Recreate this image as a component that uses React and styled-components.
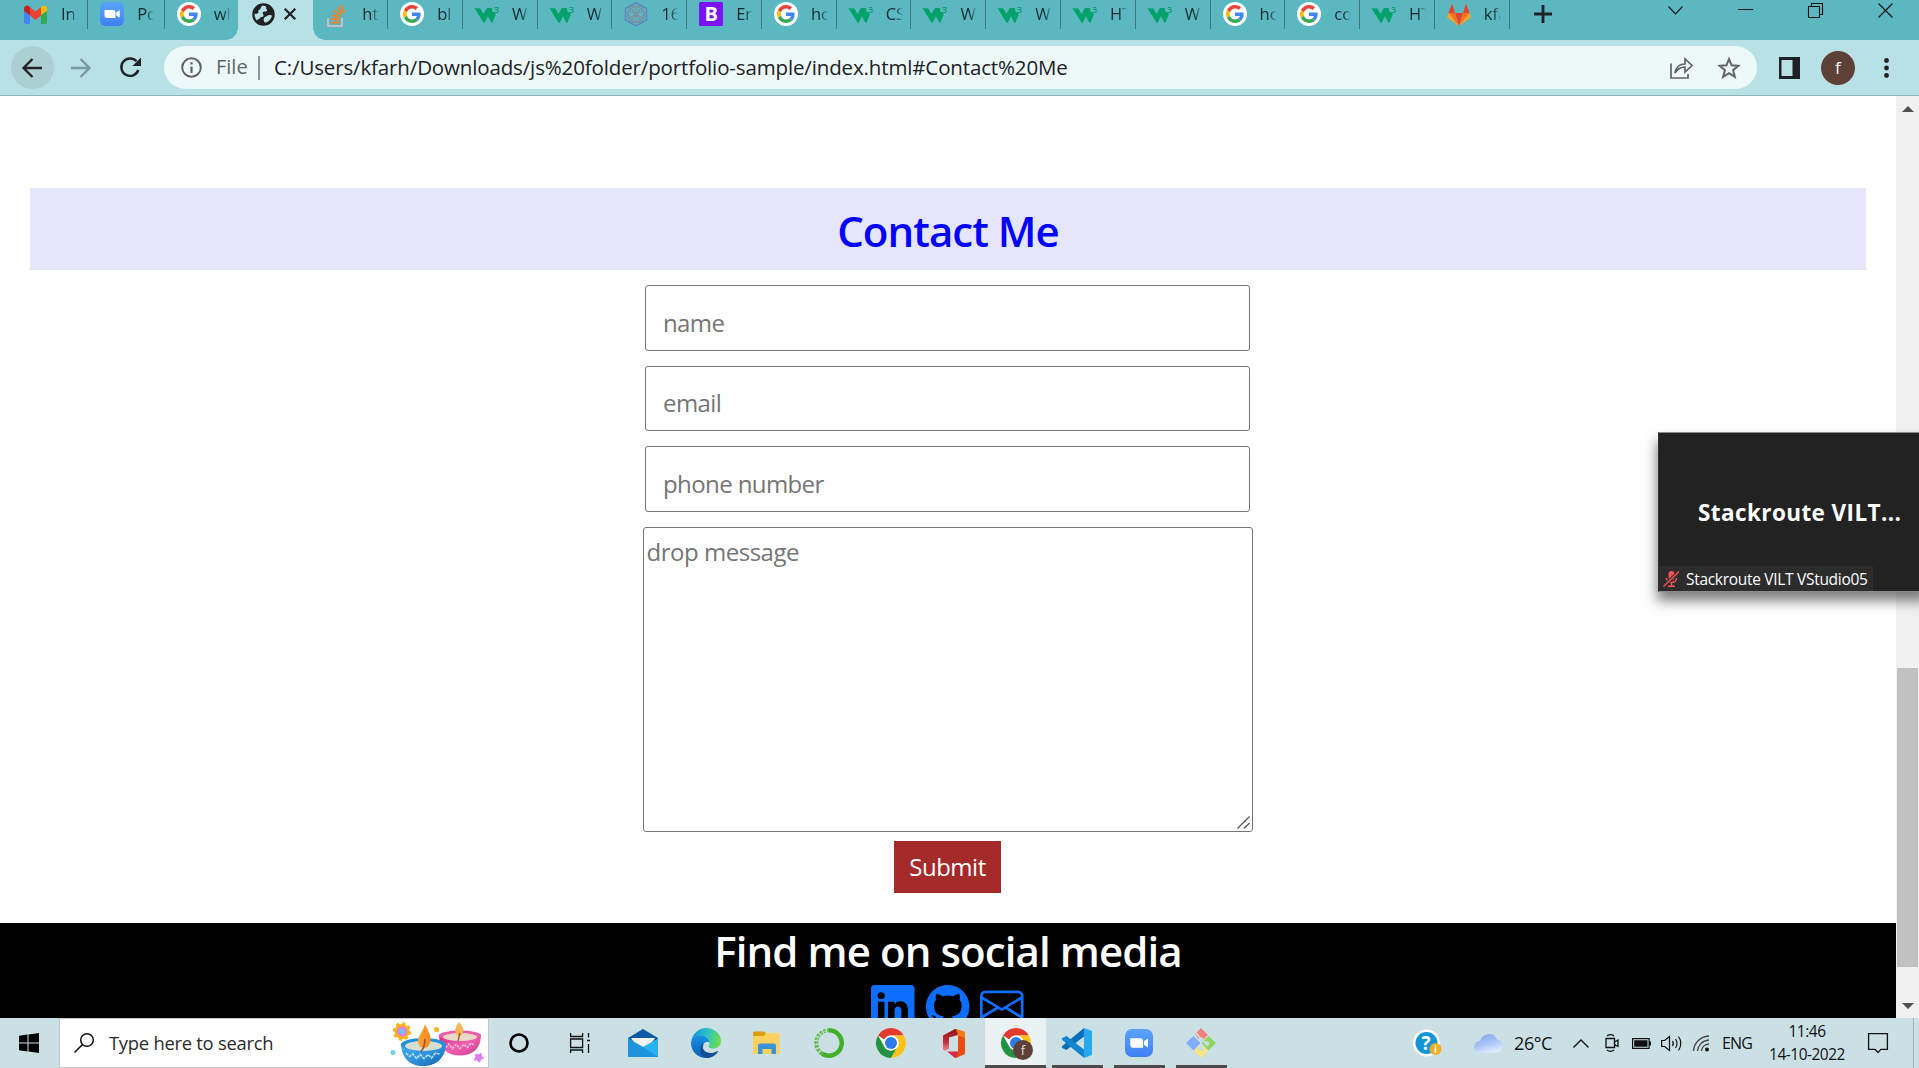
import React from "react";
import styled, { createGlobalStyle } from "styled-components";
import { BsLinkedin, BsGithub, BsEnvelope } from "react-icons/bs";

const ui = `"Open Sans", "Noto Sans", sans-serif`;

const Global = createGlobalStyle`
  *, *::before, *::after { box-sizing: border-box; }
  html, body { margin: 0; padding: 0; background: #fff; overflow: hidden; }
  body { font-family: ${ui}; }
  svg { display: block; flex: none; overflow: visible; }
`;

const Screen = styled.div`
  position: relative;
  width: 1919px;
  height: 1068px;
  display: flex;
  flex-direction: column;
  overflow: hidden;
`;

/* ---------- browser chrome ---------- */
const TabStrip = styled.div`
  display: flex;
  height: 40px;
  background: #5bb8c1;
  padding-left: 12px;
  flex: none;
`;
const Tab = styled.div`
  position: relative;
  display: flex;
  align-items: center;
  flex: none;
  width: ${(p) => p.$w || 74.78}px;
  height: 29px;
  padding: 0 0 1px 12px;
  gap: 13px;
  border-right: ${(p) => (p.$noLine ? "0" : "1.5px solid #3c777d")};
`;
const TabText = styled.span`
  width: 17px;
  overflow: hidden;
  white-space: nowrap;
  font-size: 16.5px;
  line-height: 26px;
  color: #15292c;
  mask-image: linear-gradient(90deg, #000 55%, transparent 100%);
`;
const ActiveTab = styled.div`
  position: relative;
  display: flex;
  align-items: center;
  flex: none;
  width: 75.4px;
  height: 40px;
  padding: 0 0 12px 14px;
  gap: 9px;
  background: #b8e1e5;
  &::before, &::after {
    content: "";
    position: absolute;
    bottom: 0;
    width: 12px;
    height: 12px;
  }
  &::before { left: -12px; background: radial-gradient(circle at 0 0, #5bb8c1 11.5px, #b8e1e5 12px); }
  &::after { right: -12px; background: radial-gradient(circle at 100% 0, #5bb8c1 11.5px, #b8e1e5 12px); }
`;
const NewTab = styled.div`
  width: 67px;
  height: 28px;
  display: flex;
  align-items: center;
  justify-content: center;
`;
const WindowControls = styled.div`
  display: flex;
  margin-left: auto;
  height: 21px;
  align-items: center;
`;
const Control = styled.div`
  width: 70px;
  display: flex;
  justify-content: center;
`;
const ControlsEnd = styled.div`
  width: 0;
  margin-right: -1px;
`;

const Toolbar = styled.div`
  display: flex;
  align-items: center;
  flex: none;
  height: 56px;
  background: #b8e1e5;
  border-bottom: 1px solid #8fb3ba;
  padding: 0 8px 0 11px;
`;
const NavButton = styled.div`
  width: 43px;
  height: 43px;
  margin-right: 6px;
  padding-right: 1px;
  border-radius: 50%;
  display: flex;
  align-items: center;
  justify-content: center;
  background: ${(p) => (p.$hover ? "#abcfd3" : "transparent")};
`;
const Omnibox = styled.div`
  display: flex;
  align-items: center;
  width: 1593px;
  height: 43px;
  margin-left: 6px;
  padding: 0 17px 0 17px;
  border-radius: 22px;
  background: #edf8f9;
`;
const Scheme = styled.span`
  width: 31px;
  margin-left: 14px;
  padding-bottom: 2px;
  font-size: 20px;
  color: #5f6368;
  white-space: nowrap;
`;
const Divider = styled.i`
  width: 2px;
  height: 24px;
  margin: 0 14px 0 11px;
  background: #8a9698;
`;
const Url = styled.span`
  padding-bottom: 2px;
  font-size: 20.5px;
  letter-spacing: -0.14px;
  color: #202124;
  white-space: nowrap;
`;
const OmniActions = styled.div`
  display: flex;
  margin-left: auto;
  gap: 25px;
`;
const ToolSlot = styled.div`
  width: 48.7px;
  display: flex;
  justify-content: center;
`;
const ToolRight = styled.div`
  display: flex;
  align-items: center;
  margin-left: 8px;
`;
const Avatar = styled.div`
  width: 34px;
  height: 34px;
  border-radius: 50%;
  background: #5d4037;
  color: #fff;
  display: flex;
  align-items: center;
  justify-content: center;
  font-size: 17px;
  line-height: 34px;
`;

/* ---------- page ---------- */
const Viewport = styled.div`
  display: flex;
  flex: none;
  height: 922px;
  overflow: hidden;
`;
const Page = styled.main`
  width: 1896px;
  display: flex;
  flex-direction: column;
  align-items: center;
  background: #fff;
`;
const Banner = styled.h1`
  width: 1836px;
  height: 82px;
  margin: 92px 0 15px;
  background: #e6e6fa;
  color: #00f;
  text-align: center;
  font-weight: 600;
  font-size: 42px;
  line-height: 85px;
  letter-spacing: -0.95px;
`;
const Form = styled.form`
  display: flex;
  flex-direction: column;
  align-items: center;
  padding-right: 1px;
`;
const Field = styled.input`
  width: 605px;
  height: 65.5px;
  margin: 0 0 15.2px;
  padding: 12px 17px 3px;
  border: 1px solid #767676;
  border-radius: 3px;
  font: 24px ${ui};
  letter-spacing: -0.6px;
  outline: 0;
  &::placeholder { color: #757575; opacity: 1; }
`;
const MessageWrap = styled.div`
  position: relative;
  width: 610px;
  height: 305px;
  margin-bottom: 9px;
`;
const Message = styled.textarea`
  display: block;
  width: 100%;
  height: 100%;
  padding: 7px 3px;
  border: 1px solid #767676;
  border-radius: 3px;
  resize: none;
  font: 24px/34px ${ui};
  letter-spacing: -0.48px;
  outline: 0;
  &::placeholder { color: #757575; opacity: 1; }
`;
const Grip = styled.svg`
  position: absolute;
  right: 3px;
  bottom: 3px;
`;
const Submit = styled.button`
  width: 107px;
  height: 52px;
  padding: 0;
  border: 0;
  background: #a52a2a;
  color: #fff;
  font: 24px/52px ${ui};
  letter-spacing: -0.5px;
`;
const Footer = styled.footer`
  width: 100%;
  flex: none;
  height: 96px;
  margin-top: 30px;
  background: #000;
  overflow: hidden;
  display: flex;
  flex-direction: column;
  align-items: center;
`;
const FooterTitle = styled.h2`
  flex: none;
  margin: 0;
  height: 62px;
  color: #fff;
  font-weight: 600;
  font-size: 42px;
  line-height: 55px;
  letter-spacing: -0.9px;
  white-space: nowrap;
`;
const Social = styled.div`
  display: flex;
  flex: none;
  gap: 11px;
  padding-right: 1px;
  color: #0d6efd;
`;
const Scrollbar = styled.div`
  display: flex;
  flex-direction: column;
  align-items: center;
  width: 23px;
  background: #f1f1f1;
  padding: 10px 0 9px;
`;
const Thumb = styled.i`
  flex: none;
  width: 21px;
  height: 299px;
  margin: 556px 0 auto;
  background: #c1c1c1;
`;
const Arrow = styled.i`
  border: 6px solid transparent;
  border-top-width: ${(p) => (p.$up ? 0 : 6)}px;
  border-bottom-width: ${(p) => (p.$up ? 6 : 0)}px;
  border-${(p) => (p.$up ? "bottom" : "top")}-color: #505050;
`;

/* ---------- meeting thumbnail ---------- */
const Meeting = styled.aside`
  position: absolute;
  left: 1658px;
  top: 432px;
  width: 270px;
  height: 160px;
  background: #222;
  border: 1px solid #8c8c8c;
  border-left-color: #333;
  box-shadow: -1px 9px 12px rgba(0, 0, 0, 0.5);
  color: #fff;
  display: flex;
  flex-direction: column;
  justify-content: space-between;
`;
const MeetingTitle = styled.div`
  padding: 63px 0 0 39px;
  font-weight: 700;
  font-size: 22.5px;
  line-height: 34px;
  letter-spacing: 0.4px;
  white-space: nowrap;
`;
const MeetingLabel = styled.div`
  display: flex;
  align-items: center;
  gap: 7px;
  width: 214px;
  height: 25px;
  padding: 1px 0 0 4px;
  background: #2c2c2c;
  font-size: 15.5px;
  line-height: 24px;
  letter-spacing: -0.3px;
  white-space: nowrap;
`;

/* ---------- taskbar ---------- */
const Taskbar = styled.div`
  display: flex;
  flex: none;
  height: 50px;
  background: #cbe0e5;
`;
const Start = styled.div`
  width: 59px;
  display: flex;
  align-items: center;
  padding-left: 19px;
`;
const Search = styled.div`
  display: flex;
  align-items: center;
  width: 430px;
  height: 50px;
  padding-left: 14px;
  background: #fff;
  border: 1px solid #c4c8ca;
`;
const SearchText = styled.span`
  width: 281px;
  margin-left: 15px;
  font-size: 18.4px;
  line-height: 48px;
  letter-spacing: -0.26px;
  color: #2b2b2b;
  white-space: nowrap;
`;
const Task = styled.div`
  width: ${(p) => p.$w || 62}px;
  height: 50px;
  display: flex;
  align-items: center;
  justify-content: center;
  background: ${(p) => (p.$active ? "#eaf2f4" : "transparent")};
  position: relative;
  &::after {
    content: "";
    display: ${(p) => (p.$open ? "block" : "none")};
    position: absolute;
    bottom: 0;
    left: ${(p) => (p.$active ? 0 : 5.5)}px;
    right: ${(p) => (p.$active ? 0 : 5.5)}px;
    height: 3px;
    background: #4c4a4a;
  }
`;
const Tray = styled.div`
  display: flex;
  align-items: center;
  margin-left: auto;
  color: #111;
  white-space: nowrap;
`;
const Cell = styled.div`
  width: ${(p) => p.$w}px;
  font-size: ${(p) => p.$fs || 16}px;
  letter-spacing: ${(p) => p.$ls || 0}px;
  display: flex;
  justify-content: ${(p) => (p.$start ? "flex-start" : "center")};
`;
const Clock = styled.div`
  width: 84px;
  text-align: center;
  font-size: 15.4px;
  line-height: 23px;
  letter-spacing: -0.45px;
`;
const ShowDesktop = styled.i`
  width: 6px;
  height: 50px;
  border-left: 1px solid #9fb2b7;
`;

/* ---------- icons ---------- */
const Svg = ({ w = 24, h = w, vb, children }) => (
  <svg width={w} height={h} viewBox={vb || `0 0 ${w} ${h}`} fill="none">
    {children}
  </svg>
);
const Gmail = () => (
  <Svg>
    <path d="M0 6v14a2 2 0 0 0 2 2h4V10z" fill="#4285f4" />
    <path d="M23 6v14a2 2 0 0 1-2 2h-4V10z" fill="#34a853" />
    <path d="M17 5v8l6-4V6.500c0-3-3-3.500-4-2.800z" fill="#fbbc04" />
    <path d="M0 9l6 4.500V5L4 3.700C2.500 3 0 4 0 6.500z" fill="#c5221f" />
    <path d="M6 13.500 11.500 18l5.500-4.500V5l-5.500 4.500L6 5z" fill="#ea4335" />
  </Svg>
);
const ZoomLogo = ({ s = 24 }) => (
  <Svg w={s} vb="0 0 24 24">
    <defs>
      <linearGradient id="zm" x1="0" y1="0" x2="0" y2="1">
        <stop stopColor="#5aa3fb" />
        <stop offset="1" stopColor="#3f80f6" />
      </linearGradient>
    </defs>
    <rect width="24" height="24" rx="6" fill="url(#zm)" />
    <path d="M4.500 8h8.500a2.500 2.500 0 0 1 2.500 2.500V16H7a2.500 2.500 0 0 1-2.500-2.500zM16.300 10.500l3.400-2.400v7.800l-3.400-2.400z" fill="#fff" />
  </Svg>
);
const Google = () => (
  <Svg>
    <circle cx="12" cy="12" r="12" fill="#fff" />
    <g transform="translate(3 3) scale(.375)">
      <path fill="#4285f4" d="M46.980 24.550c0-1.570-.15-3.090-.38-4.550H24v9.020h12.940c-.58 2.960-2.260 5.480-4.780 7.180l7.730 6c4.510-4.180 7.090-10.360 7.090-17.650z" />
      <path fill="#ea4335" d="M24 9.500c3.540 0 6.710 1.220 9.210 3.600l6.850-6.850C35.900 2.380 30.470 0 24 0 14.620 0 6.510 5.380 2.560 13.220l7.980 6.190C12.430 13.720 17.740 9.500 24 9.500z" />
      <path fill="#fbbc05" d="M10.530 28.590A14.500 14.500 0 0 1 9.770 24c0-1.600.27-3.140.76-4.590l-7.980-6.190A24 24 0 0 0 0 24c0 3.880.92 7.540 2.560 10.780z" />
      <path fill="#34a853" d="M24 48c6.480 0 11.930-2.130 15.890-5.810l-7.730-6c-2.150 1.450-4.920 2.300-8.160 2.300-6.260 0-11.570-4.220-13.470-9.910l-7.980 6.190C6.510 42.620 14.620 48 24 48z" />
    </g>
  </Svg>
);
const W3Mark = styled.text`
  font: 600 9.5px ${ui};
  fill: #0aa06e;
`;
const W3 = () => (
  <Svg>
    <path d="M-.5 6.300H5l3.600 5.600 3.200-5.800h5.400l-.3 2.600 4 3.500-3.500 8.500h-1L13 14.200 9.600 20.700h-1z" fill="#04a26a" />
    <W3Mark x="18.800" y="11">3</W3Mark>
  </Svg>
);
const StackOverflow = () => (
  <Svg>
    <path d="M3 16v8h14v-8" stroke="#c3bfc0" strokeWidth="2" />
    <path d="M6 20.500h8.500M6.200 16.800l8.300 1M7 13l8 2.200M9 8.700l7 4.500M12.300 5l5.200 6.500M16.700 3l2.600 7.500" stroke="#f48024" strokeWidth="2" />
  </Svg>
);
const Hexagon = () => (
  <Svg>
    <path d="M12 .8 22.500 6.500v11.500L12 24 1.500 18V6.500z" stroke="#5d86bf" strokeWidth="1.500" />
    <circle cx="12" cy="12.300" r="8" stroke="#7a90a0" strokeWidth="2" />
    <path d="M12 5v14M6 9l6 3 6-3M6 16l6-4 6 4M8 7l8 11M16 7 8 18" stroke="#7a90a0" strokeWidth="1.100" />
  </Svg>
);
const BMark = styled.text`
  font: 700 20px ${ui};
  fill: #fff;
`;
const Bootstrap = () => (
  <Svg>
    <rect width="24" height="24" rx="1.500" fill="#7a14f7" />
    <BMark x="5.500" y="19.300">B</BMark>
  </Svg>
);
const GitLab = () => (
  <Svg>
    <path d="M12 24 8 11h8z" fill="#e24329" />
    <path d="M12 24 8 11H1.500z" fill="#fc6d26" />
    <path d="M12 24 16 11h6.500z" fill="#fc6d26" />
    <path d="M1.500 11 0 15.200 12 24zM22.500 11 24 15.200 12 24z" fill="#fca326" />
    <path d="M1.500 11H8L5 1.500zM22.500 11H16l3-9.500z" fill="#e24329" />
  </Svg>
);
const Globe = () => (
  <Svg w={23}>
    <circle cx="11.500" cy="11.500" r="11.200" fill="#202124" />
    <path d="M10 2.800c-2 2.700-1 3.200-3 4.200-1.500.8.500 2.500-1.500 3.500-1 .5-1.500 0-2.800.3-.3 2 .5 5 2 6.700 1.200-1.500 2.300-1 3.300-2.500 1-1.700 3-.5 3.500-2.300.3-1.500-1.500-2.700-.5-3.700s3 .2 4-1.300-2-1.700-.7-3.200C15 3.500 12 2.500 10 2.800zM13 14c2-.8 3-2.300 5-2l2 .5c-.5 3-3 6.300-7 7.300-1.500-2-2-4.500 0-5.800z" fill="#b8e1e5" />
  </Svg>
);
const Line = ({ w, h = w, d, c = "#202124", sw = 2.2, ...r }) => (
  <svg width={w} height={h} viewBox={`0 0 ${w} ${h}`} fill="none">
    <path d={d} stroke={c} strokeWidth={sw} {...r} />
  </svg>
);

const BadgeText = styled.text`
  font: 13px ${ui};
  fill: #e9dfdb;
  text-anchor: middle;
`;
const Chrome = ({ badge }) => (
  <Svg w={30}>
    <circle cx="15" cy="15" r="15" fill="#fff" />
    <path d="M15 0a15 15 0 0 1 13 7.500H15a7.500 7.500 0 0 0-6.700 4L2 7.500A15 15 0 0 1 15 0z" fill="#e33b2e" />
    <path d="M28 7.500A15 15 0 0 1 15 30l6.500-11.200A7.500 7.500 0 0 0 15 7.500z" fill="#fcc21b" />
    <path d="M2 7.500A15 15 0 0 0 15 30l6.500-11.200a7.500 7.500 0 0 1-13 0z" fill="#229342" />
    <circle cx="15" cy="15" r="7.500" fill="#fff" />
    <circle cx="15" cy="15" r="6" fill="#2d7bea" />
    {badge && (
      <>
        <circle cx="22" cy="22" r="10" fill="#5d4037" />
        <BadgeText x="22" y="27">f</BadgeText>
      </>
    )}
  </Svg>
);
const Diyas = () => (
  <Svg w={100} h={48}>
    <defs>
      <linearGradient id="bl" x1="0" y1="0" x2="1" y2="1"><stop stopColor="#41b2f0" /><stop offset=".5" stopColor="#3093df" /><stop offset="1" stopColor="#1461a8" /></linearGradient>
      <linearGradient id="pk" x1="0" y1="0" x2="1" y2="1"><stop stopColor="#d9247f" /><stop offset=".5" stopColor="#f45fb0" /><stop offset="1" stopColor="#c63d90" /></linearGradient>
      <linearGradient id="fl" x1="0" y1="0" x2="1" y2="0"><stop stopColor="#f7a53a" /><stop offset="1" stopColor="#fb8a1e" /></linearGradient>
    </defs>
    <circle cx="14" cy="12.500" r="7.500" fill="#fbb117" />
    <circle cx="14" cy="12.500" r="8" stroke="#fbb117" strokeWidth="2.500" strokeDasharray="3.200 3.080" />
    <circle cx="14" cy="12.500" r="5" fill="#dd7df0" />
    <circle cx="14" cy="12.500" r="2.600" fill="#62cfe8" />
    <circle cx="48.500" cy="10.500" r="2.500" fill="#fbb117" />
    <circle cx="5" cy="33.500" r="2.500" fill="#6dd5e6" />
    <path d="M88 34.500q3 1.500 4 0t1.500 0q0 3 1.500 3.500t.5 1.500q-3 .5-3 3t-1.500.5q-2-2.500-4-1.500t-.5-2q1.500-2 .5-3.500z" fill="#dd7df0" />
    <path d="M51 15.500c0 14 8 21 21 21s21-7 21-21z" fill="url(#pk)" />
    <ellipse cx="72" cy="16.500" rx="21" ry="5" fill="#ed5baa" />
    <ellipse cx="72" cy="18" rx="17" ry="4" fill="#ead9c8" />
    <path d="m56 24 2.500 4 2.500-3 3.500 4.500 3.500-4 4 4 4-4 3.500 3 3.500-4.500 3 2" stroke="#fbc4e2" strokeWidth="1.500" strokeDasharray="2.500 1" />
    <path d="M71 3c6 7 5 12 0 15-6-4-4-10 0-15z" fill="#f8b552" /><path d="m70 22 2-8" stroke="#a15222" strokeWidth="1.300" />
    <path d="M13 24c0 15 9 23 22 23s23-8 23-23z" fill="url(#bl)" />
    <ellipse cx="35.500" cy="25.500" rx="22.500" ry="6.500" fill="#2590de" />
    <ellipse cx="35.500" cy="27" rx="18.500" ry="5" fill="#d6dfd0" />
    <path d="m18 34 3.500 3.500 3.500-2.500 3.500 4.500 3.500-4 4 4 4-4 3.500 3.500 4-5 4 1" stroke="#b5e0f8" strokeWidth="1.700" strokeDasharray="3 1" />
    <path d="M37 5c4 9 8 14 4 21-2 4-8 4-10 0-4-7 4-12 6-21z" fill="url(#fl)" /><path d="M33 32c4-3 3-6 4-12" stroke="#a15222" strokeWidth="1.600" />
  </Svg>
);
const Mail = () => (
  <Svg w={30} h={28}>
    <path d="M0 9 15 0l15 9v5H0z" fill="#0c59a4" />
    <path d="M3 9h24l-6 9H9z" fill="#f2f2f2" />
    <path d="M0 9.500 15 19 0 28z" fill="#1c9be5" />
    <path d="M0 28V9.500L15 18l15-8.500V28z" fill="#29b0ee" />
    <path d="M15 18 30 28H0V9.500z" fill="#1e93de" />
  </Svg>
);
const Edge = () => (
  <Svg w={30}>
    <defs>
      <linearGradient id="eg" x1="0" y1=".3" x2="1" y2=".5"><stop stopColor="#1b8fdd" /><stop offset=".5" stopColor="#2dc3c9" /><stop offset="1" stopColor="#6bdd4a" /></linearGradient>
      <linearGradient id="eb" x1="0" y1="0" x2="0" y2="1"><stop stopColor="#1a8fe0" /><stop offset="1" stopColor="#0c5fb8" /></linearGradient>
    </defs>
    <path d="M.5 12C2 5 8 0 15 0c9 0 15 6.500 15 13 0 5-4 7.500-8 7.500-3.500 0-5-1.500-4-3 2-3-.5-7-5-7C7 10.500 1 14 .5 12z" fill="url(#eg)" />
    <path d="M0 15c0-5 6-8.500 12-7 4 1 6.500 4 6.500 7.500 0-2-4.500-3-6 1-2 6 2 11 7 13C8 32 0 24 0 15z" fill="url(#eb)" />
    <path d="M12 14.500c-3 8 5 12 11 10 2-.6 3.500-1.700 4.500-1.500C25 27.500 20 30 15.500 30 10 29 6.500 20 12 14.500z" fill="#134d96" />
  </Svg>
);
const Explorer = () => (
  <Svg w={28} h={24}>
    <path d="M0 2a1.500 1.500 0 0 1 1.500-1.500H11L13 2v5H0z" fill="#dc9c10" />
    <path d="M0 5h11l2-3h13.500v21H0z" fill="#fdd060" />
    <path d="M5 23V14.500A2 2 0 0 1 7 12.500h14a2 2 0 0 1 2 2V23h-4.500v-5h-9v5z" fill="#3a93d8" />
  </Svg>
);
const Ring = () => (
  <Svg w={30}>
    <path d="M15 2.300a12.700 12.700 0 1 1-7 23.300" stroke="#43b02a" strokeWidth="4.500" />
    <path d="M8 25.600A12.700 12.700 0 0 1 15 2.300" stroke="#5fb94a" strokeWidth="4" strokeDasharray="2.600 1.200" />
    <path d="M6 24A12.700 12.700 0 0 1 12 3" stroke="#cbe0e5" strokeWidth="1" strokeDasharray="2 2" />
  </Svg>
);
const Office = () => (
  <Svg w={22} h={29}>
    <defs><linearGradient id="of" x1="0" y1="0" x2="0" y2="1"><stop stopColor="#8f1218" /><stop offset=".6" stopColor="#c5303a" /><stop offset="1" stopColor="#f08a94" /></linearGradient></defs>
    <path d="M0 6.500 12 0l3 1v5L6 8.500v11L2 22l-2-1.500z" fill="url(#of)" />
    <path d="M4 22.500h11V28l-3 1z" fill="#d8274a" />
    <path d="M13 0l9 3v22l-9 4 2-6V5z" fill="#ea4a0b" />
    <path d="M13 0l9 3v6l-7-2.500z" fill="#f77a10" />
  </Svg>
);
const VSCode = () => (
  <Svg w={30}>
    <path d="M22 0v8.500L4.500 22 .3 20a1.300 1.300 0 0 1 0-2z" fill="#0a6fb8" />
    <path d="M.3 12a1.300 1.300 0 0 1 0-2L4.500 8 22 21.500V30z" fill="#1585cf" />
    <path d="M22 0l8 3v24l-8 3z" fill="#28a8f0" />
  </Svg>
);
const Git = () => (
  <Svg w={30}>
    <path d="m15 0 7 7-7 7-6-8z" fill="#f47f7f" />
    <path d="m7.500 8 7 7-7 7.500L0 15z" fill="#80aefb" />
    <path d="m22.500 8 7.500 7-7.500 7.500-7-7.500z" fill="#8ed661" />
    <path d="m15 16 7 7-7 7-7-7z" fill="#fde47f" />
    <path d="M10 5l5 6v10M15 11l7 6" stroke="#cbe0e5" strokeWidth="1.800" />
    <circle cx="15" cy="11.500" r="2.300" fill="#cbe0e5" /><circle cx="15" cy="20.500" r="2.500" fill="#cbe0e5" /><circle cx="21" cy="15.500" r="2.300" fill="#cbe0e5" />
  </Svg>
);
const HelpText = styled.text`
  font: 700 ${(p) => p.$s}px ${ui};
  fill: #fff;
  text-anchor: middle;
`;
const Help = () => (
  <Svg w={28}>
    <circle cx="13.500" cy="14" r="13.500" fill="#fff" />
    <circle cx="13.500" cy="14" r="11" fill="#1296d8" />
    <HelpText $s={19} x="13" y="21">?</HelpText>
    <circle cx="22.500" cy="20" r="6" fill="#f6ac1c" />
    <HelpText $s={10} x="22.500" y="23.700">i</HelpText>
  </Svg>
);
const Cloud = () => (
  <Svg w={30} h={20}>
    <defs><linearGradient id="cl" x1="0" y1="0" x2=".4" y2="1"><stop stopColor="#82a7ea" /><stop offset=".6" stopColor="#a9c4f7" /><stop offset="1" stopColor="#dbe7fc" /></linearGradient></defs>
    <path d="M6 20a6 6 0 0 1 0-12A9 9 0 0 1 23 6.500 7 7 0 0 1 24 20z" fill="url(#cl)" />
  </Svg>
);

const tabs = [
  [W3, "W"], [W3, "W"], [Hexagon, "160"], [Bootstrap, "Er"], [Google, "ho"], [W3, "CS"], [W3, "W"], [W3, "W"],
  [W3, "HT"], [W3, "W"], [Google, "ho"], [Google, "co"], [W3, "HT"], [GitLab, "kfa"],
];
const TabItem = ({ icon: I, text, ...r }) => (
  <Tab {...r}><I /><TabText>{text}</TabText></Tab>
);

export default function App() {
  return (
    <Screen>
      <Global />
      <TabStrip>
        <TabItem icon={Gmail} text="Inb" $w={76.2} />
        <TabItem icon={ZoomLogo} text="Po" $w={76.6} />
        <TabItem icon={Google} text="wh" $w={73.2} $noLine />
        <ActiveTab>
          <Globe />
          <Line w={12} d="M.7.700l10.600 10.600M11.300.700.700 11.300" />
        </ActiveTab>
        <TabItem icon={StackOverflow} text="ht" />
        <TabItem icon={Google} text="bl" />
        {tabs.map(([I, t], i) => <TabItem key={i} icon={I} text={t} />)}
        <NewTab><Line w={18} d="M9 0v18M0 9h18" sw={2.8} /></NewTab>
        <WindowControls>
          <Control><Line w={15} h={9} d="M.5.500l7 7.500 7-7.500" sw={1.1} c="#111" /></Control>
          <Control><Line w={15} h={3} d="M0 .500h15" sw={1} c="#111" /></Control>
          <Control><Line w={15} d="M.5 3.500h11v11H.5zM3.500 3.500v-3h11v11h-3" sw={1.1} c="#111" /></Control>
          <Control><Line w={15} d="M.5.500l14 14M14.500.500l-14 14" sw={1.2} c="#111" /></Control>
          <ControlsEnd />
        </WindowControls>
      </TabStrip>

      <Toolbar>
        <NavButton $hover><Line w={20} d="M20 10H1.500M10.500 1 1.500 10l9 9" sw={2.3} /></NavButton>
        <NavButton><Line w={20} d="M0 10h18.500M9.500 1l9 9-9 9" sw={2.3} c="#789a9e" /></NavButton>
        <NavButton>
          <Svg w={21}>
            <path d="M18.300 13A8.700 8.700 0 1 1 16.500 4.300" stroke="#202124" strokeWidth="2.400" />
            <path d="M21 .5V9h-8.500z" fill="#202124" />
          </Svg>
        </NavButton>
        <Omnibox>
          <Svg w={21}>
            <circle cx="10.500" cy="10.500" r="9.300" stroke="#5f6368" strokeWidth="2" />
            <path d="M10.500 9.500v6.500M10.500 5.200v2.300" stroke="#5f6368" strokeWidth="2.200" />
          </Svg>
          <Scheme>File</Scheme>
          <Divider />
          <Url>C:/Users/kfarh/Downloads/js%20folder/portfolio-sample/index.html#Contact%20Me</Url>
          <OmniActions>
            <Line w={23} h={22} d="M1 6.500v14.500h17v-4M5 16c1-6 4-9 10-9V2l7 6.500-7 6.500v-5c-5 0-7 2-10 6z" sw={1.7} c="#5f6368" />
            <Line w={22} d="m11 2 2.600 6.300 6.700.5-5.200 4.400 1.700 6.600L11 16.200l-5.800 3.600 1.700-6.600-5.200-4.400 6.700-.5z" sw={2} c="#5f6368" />
          </OmniActions>
        </Omnibox>
        <ToolRight>
          <ToolSlot>
            <Svg w={21} h={22}><path d="M0 0h21v22H0zM2.500 3v16H13.500V3z" fillRule="evenodd" fill="#202124" /></Svg>
          </ToolSlot>
          <ToolSlot><Avatar>f</Avatar></ToolSlot>
          <ToolSlot>
            <Svg w={5} h={20}><g fill="#202124"><circle cx="2.500" cy="2.500" r="2.400" /><circle cx="2.500" cy="10" r="2.400" /><circle cx="2.500" cy="17.500" r="2.400" /></g></Svg>
          </ToolSlot>
        </ToolRight>
      </Toolbar>

      <Viewport>
        <Page>
          <Banner>Contact Me</Banner>
          <Form>
            <Field placeholder="name" />
            <Field placeholder="email" />
            <Field placeholder="phone number" />
            <MessageWrap>
              <Message placeholder="drop message" />
              <Grip width="13" height="13" viewBox="0 0 13 13" fill="none"><path d="M.5 12.500l12-12M7 12.500l5.500-5.500" stroke="#555" strokeWidth="1.300" /></Grip>
            </MessageWrap>
            <Submit type="button">Submit</Submit>
          </Form>
          <Footer>
            <FooterTitle>Find me on social media</FooterTitle>
            <Social>
              <BsLinkedin size={43.5} />
              <BsGithub size={43.5} />
              <BsEnvelope size={43.5} />
            </Social>
          </Footer>
        </Page>
        <Scrollbar>
          <Arrow $up />
          <Thumb />
          <Arrow />
        </Scrollbar>
      </Viewport>

      <Taskbar>
        <Start>
          <Svg w={20}><path d="M0 2.800 8.500 1.600v7.900H0zM9.500 1.400 20 0v9.500H9.500zM0 10.500h8.500v7.900L0 17.200zM9.500 10.500H20V20L9.500 18.600z" fill="#000" /></Svg>
        </Start>
        <Search>
          <Svg w={20}><circle cx="13" cy="7" r="6.300" stroke="#111" strokeWidth="1.500" /><path d="M8.500 11.500.5 19.500" stroke="#111" strokeWidth="1.600" /></Svg>
          <SearchText>Type here to search</SearchText>
          <Diyas />
        </Search>
        <Task $w={60}><Svg w={20}><circle cx="10" cy="10" r="8.500" stroke="#000" strokeWidth="2.600" /></Svg></Task>
        <Task $w={61}><Line w={20} h={20} d="M.6 0v3.500h12V0M.6 6h12v8.500H.6zM.6 20v-3h12v3M18.500 0v4.500M18.500 11v9M17 7.500h3" sw={1.3} c="#111" /></Task>
        <Task $w={65}><Mail /></Task>
        <Task $w={61}><Edge /></Task>
        <Task><Explorer /></Task>
        <Task><Ring /></Task>
        <Task><Chrome /></Task>
        <Task $w={63}><Office /></Task>
        <Task $w={61} $active $open><Chrome badge /></Task>
        <Task $open><VSCode /></Task>
        <Task $open><ZoomLogo s={28} /></Task>
        <Task $open><Git /></Task>
        <Tray>
          <Cell $w={61} $start><Help /></Cell>
          <Cell $w={40} $start><Cloud /></Cell>
          <Cell $w={58} $fs={18} $ls={-0.4} $start>26°C</Cell>
          <Cell $w={18}><Line w={16} h={9} d="M.5 8.500 8 1l7.500 7.500" sw={1.4} c="#111" /></Cell>
          <Cell $w={44}><Line w={14} h={18} d="M1 4.500h8.500v9H1zM9.500 8l3.500-2v6.500l-3.500-2M2 2c2-1.500 5-1.500 7 0M2 16c2 1.500 5 1.500 7 0" sw={1.3} c="#111" /></Cell>
          <Cell $w={15}>
            <Svg w={19} h={11}><path d="M.6.600h16.500v9.800H.6z" stroke="#111" strokeWidth="1.200" /><path d="M2.200 2.200h13.300v6.600H2.200zM17 3.500h2v4h-2z" fill="#111" /></Svg>
          </Cell>
          <Cell $w={44}><Line w={21} h={17} d="M.6 5.500h3L8.500 1.500v14l-4.900-4H.6zM11.500 6c1 1.500 1 3.500 0 5M14.500 4c2 2.500 2 6.500 0 9M17.500 1.500c3 4 3 10 0 14" sw={1.2} c="#111" /></Cell>
          <Cell $w={16}>
            <Svg w={17}><path d="M.5 16C1 8 7 1.500 16 1M4.500 16C5 10.500 9 5.500 16 5M8.500 16c.3-3.500 3-6.700 7.500-7" stroke="#444" strokeWidth="1.300" /><circle cx="14" cy="14.500" r="2" fill="#111" /></Svg>
          </Cell>
          <Cell $w={56} $fs={16} $ls={-0.9}>ENG</Cell>
          <Clock>11:46<br />14-10-2022</Clock>
          <Cell $w={57}><Line w={20} h={21} d="M.6.600h18.800v15.800h-6.500L10 19.500 7 16.400H.6z" sw={1.3} c="#111" /></Cell>
          <Cell $w={7} />
          <ShowDesktop />
        </Tray>
      </Taskbar>

      <Meeting>
        <MeetingTitle>Stackroute VILT...</MeetingTitle>
        <MeetingLabel>
          <Svg w={16}>
            <rect x="5.500" y="0" width="6" height="9.500" rx="3" fill="#f0535a" />
            <path d="M3.500 7c0 6 10 6 10 0M8.500 12v3M5 15.300h7" stroke="#f0535a" strokeWidth="1.500" />
            <path d="M.5 15.500 16 .5" stroke="#2c2c2c" strokeWidth="3.200" />
            <path d="M.5 15.500 16 .5" stroke="#f0535a" strokeWidth="1.500" />
          </Svg>
          Stackroute VILT VStudio05
        </MeetingLabel>
      </Meeting>
    </Screen>
  );
}
